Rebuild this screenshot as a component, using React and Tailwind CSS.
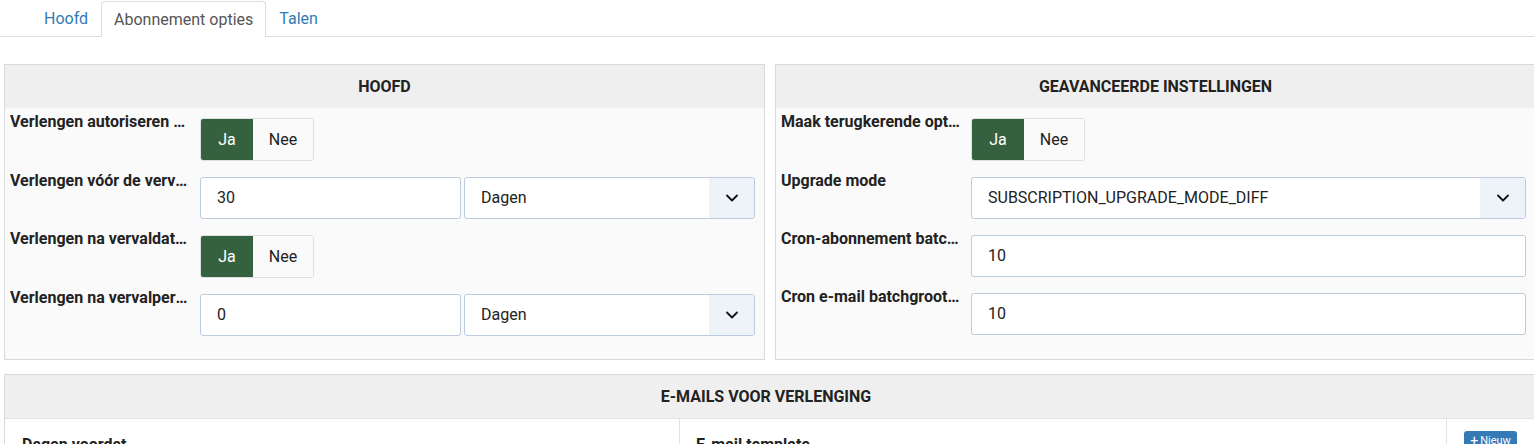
import React from "react";

const font = { fontFamily: "Roboto, 'Liberation Sans', sans-serif" };

function Chevron() {
  return (
    <svg width="16" height="16" viewBox="0 0 16 16" fill="none">
      <path d="M3 5.5 L8 10.5 L13 5.5" stroke="#111" strokeWidth="1.8" strokeLinecap="round" strokeLinejoin="round" />
    </svg>
  );
}

function Toggle() {
  return (
    <div className="mt-[6px] flex h-[43px] w-[114px] overflow-hidden rounded-[3px] border border-[#dcdfe3] text-[16px]">
      <div className="flex w-[52px] items-center justify-center bg-[#35613f] text-white">Ja</div>
      <div className="flex flex-1 items-center justify-center bg-[#fafafa] text-[#222]">Nee</div>
    </div>
  );
}

function Input({ value, className = "" }) {
  return (
    <div className={"flex h-[42px] items-center rounded-[3px] border border-[#bccbe0] bg-white pl-4 text-[16px] text-[#222] " + className}>
      {value}
    </div>
  );
}

function Select({ value, className = "" }) {
  return (
    <div className={"flex h-[42px] overflow-hidden rounded-[3px] border border-[#bccbe0] bg-white text-[16px] text-[#222] " + className}>
      <div className="flex flex-1 items-center pl-4">{value}</div>
      <div className="flex w-[45px] items-center justify-center bg-[#eef3fa]">
        <Chevron />
      </div>
    </div>
  );
}

function Row({ label, children }) {
  return (
    <div className="flex items-start">
      <div className="w-[190px] shrink-0 pr-[11px] text-[16px] font-bold leading-5 text-[#222]">
        <div className="truncate">{label}</div>
      </div>
      <div className="flex flex-1 items-start">{children}</div>
    </div>
  );
}

function Panel({ title, children }) {
  return (
    <div className="border border-[#d9d9d9] bg-[#fafafa]">
      <div className="flex h-[43px] items-center justify-center bg-[#efefef] text-[16px] font-bold text-[#222]">
        {title}
      </div>
      <div className="flex flex-col gap-[10px] pb-[23px] pl-[5px] pr-[9px] pt-[4px]">{children}</div>
    </div>
  );
}

export default function App() {
  return (
    <div className="w-full overflow-hidden bg-white" style={font}>
      <div className="w-[1536px]">
        <div className="flex h-[37px] items-end border-b border-[#dddddd] pl-[31px]">
          <div className="flex h-[35px] items-center px-[13px] text-[16px] text-[#337ab7]">Hoofd</div>
          <div className="-mb-px flex h-[36px] items-center rounded-t-[4px] border border-b-0 border-[#dddddd] bg-white px-[12px] text-[16px] text-[#555]">
            Abonnement opties
          </div>
          <div className="flex h-[35px] items-center px-[13px] text-[16px] text-[#337ab7]">Talen</div>
        </div>

        <div className="pl-[4px] pt-[27px]">
          <div className="grid grid-cols-2 gap-[10px]">
            <Panel title="HOOFD">
              <Row label="Verlengen autoriseren na vervaldatum">
                <Toggle />
              </Row>
              <Row label="Verlengen vóór de vervaldatum">
                <div className="mt-[6px] flex flex-1 gap-[3px]">
                  <Input value="30" className="w-[261px]" />
                  <Select value="Dagen" className="flex-1" />
                </div>
              </Row>
              <Row label="Verlengen na vervaldatum">
                <Toggle />
              </Row>
              <Row label="Verlengen na vervalperiode">
                <div className="mt-[6px] flex flex-1 gap-[3px]">
                  <Input value="0" className="w-[261px]" />
                  <Select value="Dagen" className="flex-1" />
                </div>
              </Row>
            </Panel>
            <Panel title="GEAVANCEERDE INSTELLINGEN">
              <Row label="Maak terugkerende opties aan">
                <Toggle />
              </Row>
              <Row label="Upgrade mode">
                <Select value="SUBSCRIPTION_UPGRADE_MODE_DIFF" className="mt-[6px] flex-1" />
              </Row>
              <Row label="Cron-abonnement batchgrootte">
                <Input value="10" className="mt-[6px] flex-1" />
              </Row>
              <Row label="Cron e-mail batchgrootte">
                <Input value="10" className="mt-[6px] flex-1" />
              </Row>
            </Panel>
          </div>

          <div className="mt-[14px] border border-[#d9d9d9] bg-white">
            <div className="flex h-[44px] items-center justify-center border-b border-[#e3e3e3] bg-[#efefef] pr-[8px] text-[16px] font-bold text-[#222]">
              E-MAILS VOOR VERLENGING
            </div>
            <div className="flex h-[40px]">
              <div className="w-[675px] border-r border-[#e3e3e3] pl-[17px] pt-[14px] text-[16px] font-bold text-[#222]">Dagen voordat</div>
              <div className="w-[767px] border-r border-[#e3e3e3] pl-[16px] pt-[14px] text-[16px] font-bold text-[#222]">E-mail template</div>
              <div className="flex-1 pl-[17px] pt-[12px]">
                <div className="flex h-[20px] w-[53px] items-center justify-center gap-[2px] rounded-[3px] bg-[#337ab7] text-[11px] text-white">
                  <span className="text-[14px] leading-none">+</span>Nieuw
                </div>
              </div>
            </div>
          </div>
        </div>
      </div>
    </div>
  );
}
